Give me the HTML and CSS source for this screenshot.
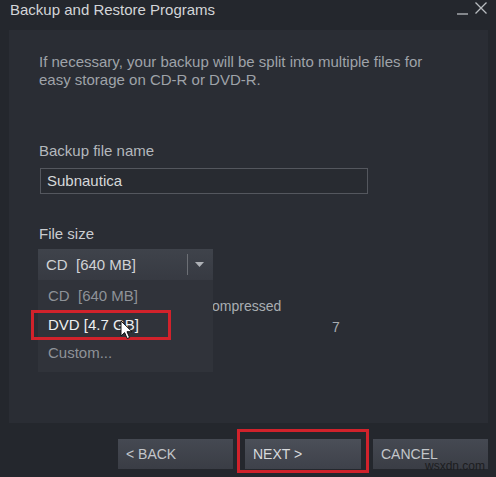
FILE: index.html
```html
<!DOCTYPE html>
<html>
<head>
<meta charset="utf-8">
<link rel="stylesheet" href="styles.css">
</head>
<body>
<div class="window">
  <div class="titlebar">
    <span class="title">Backup and Restore Programs</span>
    <div class="win-controls">
      <svg class="ctl-min" width="13" height="14" viewBox="0 0 13 14"><path d="M1 12h11" stroke="#b9bcc0" stroke-width="1.3"/></svg>
      <svg class="ctl-close" width="14" height="14" viewBox="0 0 14 14"><path d="M1.5 1.5l11 11M12.5 1.5l-11 11" stroke="#b9bcc0" stroke-width="1.3"/></svg>
    </div>
  </div>
  <div class="panel">
    <p class="desc">If necessary, your backup will be split into multiple files for<br>easy storage on CD-R or DVD-R.</p>
    <div class="label name-label">Backup file name</div>
    <div class="input">Subnautica</div>
    <div class="label size-label">File size</div>
    <div class="select-wrap">
      <div class="select">
        <span class="select-text">CD&nbsp; [640 MB]</span>
        <span class="select-sep"></span>
        <svg class="select-arrow" width="9" height="5" viewBox="0 0 9 5"><path d="M0 0h9L4.5 5z" fill="#aeb1b6"/></svg>
      </div>
      <ul class="menu">
        <li class="item">CD&nbsp; [640 MB]</li>
        <li class="item item-active">DVD [4.7 GB]</li>
        <li class="item">Custom...</li>
      </ul>
      <div class="highlight"></div>
      <svg class="cursor" width="13" height="20" viewBox="0 0 13 20"><path d="M1 1v15l3.6-3.4 2.6 5.9 2.4-1-2.6-5.8H12z" fill="#ffffff" stroke="#111" stroke-width="1"/></svg>
    </div>
    <div class="stats">
      <span></span><span class="stat-mid">ompressed</span><span></span>
      <span></span><span></span><span class="stat-val">7</span>
    </div>
  </div>
  <div class="footer">
    <button class="btn btn-side">&lt; BACK</button>
    <div class="next-box"><button class="btn btn-next">NEXT &gt;</button></div>
    <button class="btn btn-side">CANCEL</button>
  </div>
  <span class="watermark">wsxdn.com</span>
</div>
</body>
</html>
```
FILE: styles.css
```css
* { box-sizing: border-box; }
html, body { margin: 0; padding: 0; }
body {
  width: 496px;
  height: 477px;
  overflow: hidden;
  background: #24272d;
  font-family: "Liberation Sans", Arial, sans-serif;
}
.window {
  position: relative;
  width: 496px;
  height: 477px;
}
.titlebar {
  height: 30px;
  display: flex;
  align-items: flex-start;
  justify-content: space-between;
  padding: 1px 8px 0 10px;
}
.title {
  font-size: 15px;
  line-height: 18px;
  color: #d3d5d8;
}
.win-controls {
  display: flex;
  gap: 5px;
}
.ctl-min { margin-top: 1px; }
.ctl-close { margin-top: 0; }
.panel {
  position: relative;
  margin: 0 8px 0 9px;
  height: 393px;
  background: #2a2d34;
  padding: 23px 0 0 30px;
}
.desc {
  margin: 0;
  font-size: 15px;
  line-height: 18px;
  color: #9fa3a9;
}
.label {
  font-size: 15px;
  line-height: 18px;
  color: #b4b8bd;
}
.name-label { margin-top: 53px; }
.input {
  margin-top: 8px;
  margin-left: 1px;
  width: 328px;
  height: 26px;
  border: 1px solid #54575e;
  background: #282b31;
  color: #d6d8da;
  font-size: 15px;
  line-height: 24px;
  padding-left: 6px;
}
.size-label {
  margin-top: 31px;
  color: #c9ccd0;
}
.select-wrap {
  position: relative;
  margin-top: 6px;
  margin-left: -1px;
  width: 175px;
  height: 31px;
}
.select {
  display: flex;
  align-items: center;
  height: 31px;
  background: linear-gradient(#3f434b, #373a42);
  padding-left: 8px;
}
.select-text {
  flex: 1;
  font-size: 15px;
  color: #d0d2d5;
}
.select-sep {
  width: 1px;
  height: 21px;
  background: #6c6f75;
  margin-right: 7px;
}
.select-arrow { margin-right: 9px; }
.menu {
  position: absolute;
  z-index: 2;
  left: 0;
  top: 31px;
  width: 175px;
  height: 92px;
  margin: 0;
  padding: 2px 0 0;
  list-style: none;
  background: #30333a;
}
.item {
  height: 28.5px;
  line-height: 28px;
  padding-left: 10px;
  font-size: 15px;
  color: #8e9298;
}
.item-active { color: #eceef0; }
.highlight {
  position: absolute;
  z-index: 3;
  left: -7px;
  top: 61px;
  width: 140px;
  height: 30px;
  border: 3px solid #d1222b;
}
.cursor {
  position: absolute;
  z-index: 4;
  left: 82px;
  top: 71px;
}
.stats {
  display: grid;
  grid-template-columns: 171px 122px auto;
  row-gap: 3px;
  margin-top: 17px;
  font-size: 14px;
  line-height: 18px;
  color: #a9adb2;
}
.stat-mid { margin-left: 2px; }
.footer {
  display: flex;
  justify-content: flex-end;
  align-items: flex-start;
  padding: 6px 8px 0 0;
}
.btn {
  width: 115px;
  height: 30px;
  border: none;
  background: linear-gradient(#454952, #3a3d45);
  color: #c3c6ca;
  font-family: "Liberation Sans", Arial, sans-serif;
  font-size: 14px;
  text-align: left;
  padding: 0 0 0 8px;
}
.btn-side { margin-top: 10px; }
.next-box {
  margin: 0 4px 0 4px;
  width: 132px;
  height: 44px;
  border: 3px solid #d1222b;
  padding: 7px 0 0 5px;
}
.btn-next {
  display: block;
  width: 116px;
  color: #d8dadd;
  background: linear-gradient(#4b4f58, #3e414a);
}
.watermark {
  position: absolute;
  right: 11px;
  bottom: 4px;
  font-size: 12px;
  color: #1c1d20;
}
```
